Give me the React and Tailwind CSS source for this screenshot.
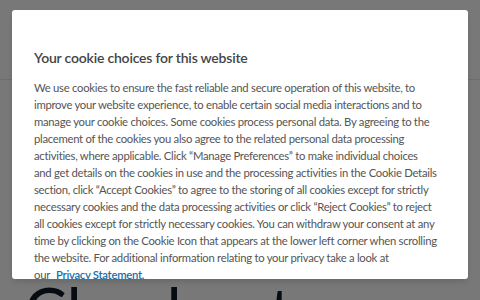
const lines = [
  "We use cookies to ensure the fast reliable and secure operation of this website, to",
  "improve your website experience, to enable certain social media interactions and to",
  "manage your cookie choices. Some cookies process personal data. By agreeing to the",
  "placement of the cookies you also agree to the related personal data processing",
  "activities, where applicable. Click “Manage Preferences” to make individual choices",
  "and get details on the cookies in use and the processing activities in the Cookie Details",
  "section, click “Accept Cookies” to agree to the storing of all cookies except for strictly",
  "necessary cookies and the data processing activities or click “Reject Cookies” to reject",
  "all cookies except for strictly necessary cookies. You can withdraw your consent at any",
  "time by clicking on the Cookie Icon that appears at the lower left corner when scrolling",
  "the website. For additional information relating to your privacy take a look at",
];

export default function App() {
  return (
    <div className="relative h-[300px] w-[480px] overflow-hidden bg-white font-['Lato','Liberation_Sans',sans-serif]">
      {/* page behind the dialog */}
      <div className="h-[80px] border-b border-gray-200 bg-white" />
      <div className="px-[24px] pt-[198px]">
        <h1 className="text-[64px] font-normal leading-none text-gray-900">Checkout</h1>
      </div>

      {/* overlay */}
      <div className="absolute inset-0 bg-black/[0.53]">
        <div className="ml-[12px] mt-[10px] h-[269px] w-[456px] overflow-hidden rounded-[3px] bg-white px-[22px] pt-[38px] shadow-md">
          <h2 className="text-[14px] font-semibold leading-[20px] tracking-[-0.2px] text-[#444]">
            Your cookie choices for this website
          </h2>
          <div className="mt-[11px] text-[11.3px] leading-[17px] tracking-[-0.28px] text-[#555]">
            {lines.map((l, i) => (
              <p key={i} className="whitespace-nowrap">{l}</p>
            ))}
            <p className="whitespace-nowrap">
              our
              <a href="#" className="ml-[6px] font-semibold text-[#1a6fa8]">
                Privacy Statement.
              </a>
            </p>
          </div>
        </div>
      </div>
    </div>
  );
}
